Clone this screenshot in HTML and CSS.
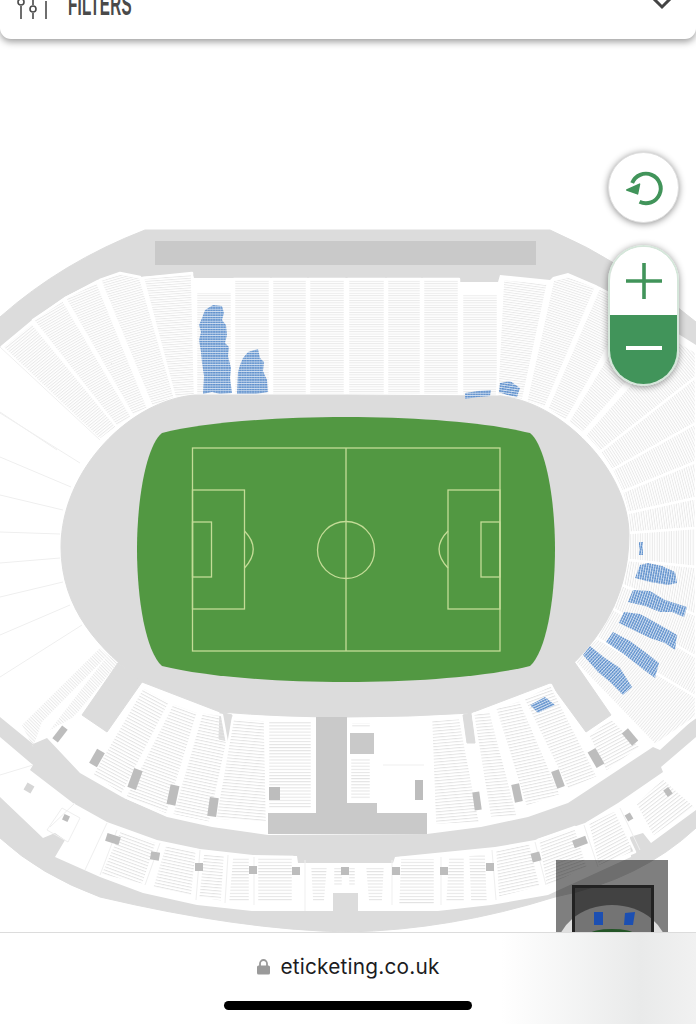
FILE: index.html
```html
<!DOCTYPE html>
<html lang="en">
<head>
<meta charset="utf-8">
<title>Seat map</title>
<link rel="stylesheet" href="styles.css">
</head>
<body>
<header class="filters">
  <svg class="filters-icon" viewBox="0 0 34 20" width="34" height="20" aria-hidden="true">
    <g class="icon-line">
      <circle cx="4" cy="2" r="3"/><path d="M4 6V19"/>
      <circle cx="16" cy="9" r="3"/><path d="M16 0V5M16 13V19"/>
      <circle cx="29" cy="-4" r="3"/><path d="M29 1V19"/>
    </g>
  </svg>
  <span class="filters-label">FILTERS</span>
  <svg class="filters-chevron" viewBox="0 0 22 10" width="22" height="10" aria-hidden="true">
    <path d="M1 -3L11 7L21 -3"/>
  </svg>
</header>

<main class="map">
  <svg class="stadium" viewBox="0 39 696 893" width="696" height="893" role="img" aria-label="Stadium seat map">
    <defs>
      <pattern id="r" width="4" height="2.4" patternUnits="userSpaceOnUse"><rect width="4" height="1" fill="#e9e9e9"/></pattern>
      <pattern id="r-39" href="#r" patternTransform="rotate(-39)"/>
      <pattern id="r-30" href="#r" patternTransform="rotate(-30)"/>
      <pattern id="r-22" href="#r" patternTransform="rotate(-22)"/>
      <pattern id="r-16" href="#r" patternTransform="rotate(-16)"/>
      <pattern id="r-4" href="#r" patternTransform="rotate(-4)"/>
      <pattern id="r8" href="#r" patternTransform="rotate(8)"/>
      <pattern id="r18" href="#r" patternTransform="rotate(18)"/>
      <pattern id="r26" href="#r" patternTransform="rotate(26)"/>
      <pattern id="r42" href="#r" patternTransform="rotate(42)"/>
      <pattern id="r50" href="#r" patternTransform="rotate(50)"/>
      <pattern id="r57" href="#r" patternTransform="rotate(57)"/>
      <pattern id="r65" href="#r" patternTransform="rotate(65)"/>
      <pattern id="r75" href="#r" patternTransform="rotate(75)"/>
      <pattern id="r82" href="#r" patternTransform="rotate(82)"/>
      <pattern id="r90" href="#r" patternTransform="rotate(90)"/>
      <pattern id="r100" href="#r" patternTransform="rotate(100)"/>
      <pattern id="r110" href="#r" patternTransform="rotate(110)"/>
      <pattern id="r120" href="#r" patternTransform="rotate(120)"/>
      <pattern id="r130" href="#r" patternTransform="rotate(130)"/>
      <pattern id="r45" href="#r" patternTransform="rotate(45)"/>

      <pattern id="l" width="4" height="3.1" patternUnits="userSpaceOnUse"><rect width="4" height="1" fill="#e3e3e3"/></pattern>
      <pattern id="l0" href="#l"/>
      <pattern id="l28" href="#l" patternTransform="rotate(28)"/>
      <pattern id="l20" href="#l" patternTransform="rotate(20)"/>
      <pattern id="l12" href="#l" patternTransform="rotate(12)"/>
      <pattern id="l5" href="#l" patternTransform="rotate(5)"/>
      <pattern id="l-5" href="#l" patternTransform="rotate(-5)"/>
      <pattern id="l-12" href="#l" patternTransform="rotate(-12)"/>
      <pattern id="l-20" href="#l" patternTransform="rotate(-20)"/>
      <pattern id="l-28" href="#l" patternTransform="rotate(-28)"/>
      <pattern id="l-38" href="#l" patternTransform="rotate(-38)"/>

      <pattern id="b" width="2.6" height="2.4" patternUnits="userSpaceOnUse">
        <rect width="2.6" height="2.4" fill="#d5e2f2"/><rect width="2.3" height="1.5" fill="#5f90cc"/>
      </pattern>
      <pattern id="b0" href="#b"/>
      <pattern id="b8" href="#b" patternTransform="rotate(8)"/>
      <pattern id="b-25" href="#b" patternTransform="rotate(-25)"/>
      <pattern id="b100" href="#b" patternTransform="rotate(100)"/>
      <pattern id="b108" href="#b" patternTransform="rotate(108)"/>
      <pattern id="b115" href="#b" patternTransform="rotate(115)"/>
      <pattern id="b123" href="#b" patternTransform="rotate(123)"/>
      <pattern id="b133" href="#b" patternTransform="rotate(133)"/>
    </defs>

    <!-- outer concourse -->
    <path class="concourse" d="M0 317Q62 262 145 230L550 230Q625 262 696 322L696 828Q640 880 555 897Q450 930 348 932Q240 930 100 897Q40 875 0 838Z"/>
    <rect class="block-dark" x="155" y="241" width="381" height="24"/>

    <!-- upper stand white area -->
    <polygon class="white" points="0,347 2,345 32,320 63,298 97,280 120,273 140,277 192,273 194,278 460,278 460,282 498,282 500,275 550,280 553,277 568,273 596,285 640,310 696,345 696,717 660,750 653,747 600,782 568,803 528,817 481,827 427,834 268,835 212,827 167,817 122,797 80,773 47,738 33,744 0,717"/>

    <!-- upper stand, top and fans -->
    <g class="sec">
      <polygon fill="url(#r-39)" points="2,347 32,323 117,427 100,440"/>
      <polygon fill="url(#r-30)" points="33,320 63,300 132,417 117,427"/>
      <polygon fill="url(#r-22)" points="65,298 97,282 148,408 133,416"/>
      <polygon fill="url(#r-16)" points="100,280 120,273 140,277 175,398 152,407"/>
      <polygon fill="url(#r-4)" points="143,278 192,273 195,395 175,398"/>
      <rect fill="url(#r)" x="196" y="292" width="36" height="103"/>
      <rect fill="url(#r)" x="234" y="279" width="36" height="116"/>
      <rect fill="url(#r)" x="272" y="279" width="35" height="116"/>
      <rect fill="url(#r)" x="309" y="279" width="36" height="116"/>
      <rect fill="url(#r)" x="348" y="279" width="37" height="116"/>
      <rect fill="url(#r)" x="387" y="279" width="34" height="116"/>
      <rect fill="url(#r)" x="423" y="279" width="36" height="116"/>
      <rect fill="url(#r)" x="462" y="294" width="36" height="102"/>
      <polygon fill="url(#r8)" points="503,279 548,283 523,400 497,397"/>
      <polygon fill="url(#r18)" points="553,280 568,276 596,287 545,408 526,402"/>
      <polygon fill="url(#r26)" points="599,288 632,305 566,421 547,409"/>
      <polygon fill="url(#r42)" points="636,308 668,335 583,433 568,422"/>
      <polygon fill="url(#r50)" points="672,338 696,352 696,377 600,452 585,435"/>
      <polygon fill="url(#r57)" points="600,452 696,377 696,423 612,470"/>
      <polygon fill="url(#r65)" points="612,470 696,423 696,462 622,492"/>
      <polygon fill="url(#r75)" points="622,492 696,462 696,498 628,513"/>
      <polygon fill="url(#r82)" points="628,513 696,498 696,528 629,533"/>
      <polygon fill="url(#r90)" points="629,533 696,528 696,567 628,560"/>
      <polygon fill="url(#r100)" points="628,560 696,567 696,615 622,585"/>
      <polygon fill="url(#r110)" points="622,585 696,615 696,657 610,607"/>
      <polygon fill="url(#r120)" points="610,607 696,657 696,697 597,638"/>
      <polygon fill="url(#r130)" points="597,638 696,697 696,717 655,745 573,660"/>
    </g>

    <!-- left side empty sector lines -->
    <g class="thin">
      <path d="M0 347L100 440M0 412L57 450M0 413L80 463M0 457L71 487M0 495L63 510M0 532L60 534M0 563L60 558M0 597L63 582M0 635L70 605M0 677L82 625"/>
    </g>
    <polygon fill="url(#r45)" points="100,648 108,655 42,722 33,747 22,725"/>
    <polygon fill="url(#r45)" points="108,655 118,663 78,712 72,718 50,730"/>

    <!-- inner bowl -->
    <path class="concourse" d="M346 395L195 395C130 400 61 470 61 547C61 610 100 650 142 682L220 712Q280 717 346 717Q410 717 471 713L550 683C595 650 629 600 629 535C629 470 560 400 498 396Z"/>
    <polygon class="concourse" points="142,682 107,732 82,715 118,663"/>
    <polygon class="concourse" points="550,683 586,732 611,715 573,660"/>
    <polygon class="concourse" points="220,712 219,739 228,741 232,715"/>
    <polygon class="concourse" points="463,715 467,743 475,743 471,713"/>

    <!-- pitch -->
    <path class="pitch" d="M346 417C420 417 490 423 530 433C546 446 555 500 555 549C555 600 546 652 530 666C490 676 420 682 346 682C272 682 202 676 162 666C146 652 137 600 137 549C137 500 146 446 162 433C202 423 272 417 346 417Z"/>
    <g class="pitch-lines">
      <rect x="192.500" y="448" width="307.500" height="203"/>
      <path d="M346 448V651"/>
      <circle cx="346" cy="550" r="28.500"/>
      <rect x="192.500" y="490" width="52" height="119"/>
      <rect x="192.500" y="522" width="19" height="55"/>
      <path d="M244.500 531Q262 549 244.500 568"/>
      <rect x="448" y="490" width="52" height="119"/>
      <rect x="481" y="522" width="19" height="55"/>
      <path d="M448 531Q430 549 448 568"/>
    </g>

    <!-- lower stand -->
    <g class="sec">
      <polygon fill="url(#l28)" points="143,687 170,702 122,795 92,775"/>
      <polygon fill="url(#l20)" points="173,703 198,712 167,815 125,797"/>
      <polygon fill="url(#l12)" points="202,712 222,715 227,743 210,823 172,815"/>
      <polygon fill="url(#l5)" points="233,718 265,720 267,823 215,820"/>
      <rect fill="url(#l0)" x="268" y="720" width="44" height="90"/>
      <rect fill="url(#l0)" x="351" y="722" width="20" height="6"/>
      <rect fill="url(#l0)" x="350" y="757" width="21" height="43"/>
      <polygon fill="url(#l-5)" points="431,720 460,718 480,823 435,825"/>
      <polygon fill="url(#l-5)" points="473,714 490,710 518,817 490,818 478,745"/>
      <polygon fill="url(#l-12)" points="495,708 520,700 561,795 526,807"/>
      <polygon fill="url(#l-20)" points="523,698 551,685 598,777 568,790"/>
      <polygon fill="url(#l-28)" points="588,735 611,718 641,747 606,772"/>
    </g>
    <polygon class="block-dark" points="316,717 347,717 347,803 377,803 377,813 427,813 427,834 268,834 268,813 316,813"/>
    <rect class="white" x="377" y="718" width="50" height="95"/>
    <rect class="block-dark" x="350" y="733" width="24" height="21"/>
    <path class="thin" d="M383 765H424"/>

    <g class="gangway">
      <rect x="415" y="780" width="8" height="20"/>
      <rect x="269" y="787" width="11" height="13"/>
      <rect x="-3.500" y="-8" width="7" height="16" transform="translate(60 734) rotate(38)"/>
      <rect x="-4.500" y="-8" width="9" height="16" transform="translate(97 758) rotate(30)"/>
      <rect x="-4.500" y="-10" width="9" height="20" transform="translate(135 779) rotate(20)"/>
      <rect x="-4.500" y="-10" width="9" height="20" transform="translate(173 795) rotate(12)"/>
      <rect x="-4.500" y="-9.500" width="9" height="19" transform="translate(213 807) rotate(8)"/>
      <rect x="-3.500" y="-9" width="7" height="18" transform="translate(477 801) rotate(-8)"/>
      <rect x="-4" y="-9" width="8" height="18" transform="translate(517 793) rotate(-12)"/>
      <rect x="-4" y="-9" width="8" height="18" transform="translate(558 779) rotate(-20)"/>
      <rect x="-4.500" y="-9" width="9" height="18" transform="translate(596 758) rotate(-30)"/>
      <rect x="-4" y="-8" width="8" height="16" transform="translate(630 737) rotate(-40)"/>
    </g>

    <!-- outer tier -->
    <polygon class="white" points="0,737 33,765 30,770 73,803 107,822 157,840 200,849 253,855 297,856 298,863 393,863 395,857 495,847 535,840 585,823 618,803 663,772 661,767 696,737 696,810 651,843 643,833 630,837 631,857 548,895 491,905 438,911 358,911 358,893 333,893 333,911 252,911 197,905 143,893 100,877 55,857 65,840 55,833 43,838 0,797"/>
    <g class="sec">
      <polygon fill="url(#l20)" points="120,830 157,842 143,885 100,875"/>
      <polygon fill="url(#l12)" points="165,845 197,850 192,897 152,888"/>
      <polygon fill="url(#l5)" points="203,853 225,855 222,902 198,898"/>
      <polygon fill="url(#l0)" points="232,857 250,857 250,903 228,902"/>
      <rect fill="url(#l0)" x="257" y="857" width="36" height="46"/>
      <polygon fill="url(#l0)" points="310,867 328,867 325,903 312,903"/>
      <rect fill="url(#l0)" x="333" y="867" width="10" height="20"/>
      <rect fill="url(#l0)" x="348" y="867" width="8" height="20"/>
      <polygon fill="url(#l0)" points="365,867 385,867 383,903 368,903"/>
      <polygon fill="url(#l0)" points="400,858 435,858 435,905 398,905"/>
      <polygon fill="url(#l0)" points="448,857 465,856 465,903 445,903"/>
      <polygon fill="url(#l0)" points="468,855 486,853 488,902 470,902"/>
      <polygon fill="url(#l-12)" points="495,850 530,843 541,887 498,898"/>
      <polygon fill="url(#l-20)" points="538,840 575,827 588,867 546,888"/>
      <polygon fill="url(#l-28)" points="588,823 615,810 635,852 598,867"/>
      <polygon fill="url(#l-38)" points="635,803 663,778 696,807 653,837"/>
    </g>
    <g class="thin">
      <path d="M0 775L33 765M75 803L50 827M107 823L85 870M47 830L62 808L80 818L68 842L47 830M117 830L100 875M160 843L145 885M200 850L196 900M228 855L225 903M254 857V905M305 860V911M392 860V905M441 857V905M492 850L496 900M535 842L546 885M584 825L598 867M620 808L640 850"/>
    </g>
    <g class="gangway">
      <rect x="-7" y="-4" width="14" height="8" transform="translate(113 839) rotate(18)"/>
      <rect x="-4.500" y="-4" width="9" height="8" transform="translate(155 856) rotate(10)"/>
      <rect x="195" y="863" width="8" height="8"/>
      <rect x="249" y="866" width="8" height="8"/>
      <rect x="292" y="867" width="8" height="8"/>
      <rect x="341" y="867" width="8" height="8"/>
      <rect x="392" y="867" width="8" height="8"/>
      <rect x="440" y="867" width="8" height="8"/>
      <rect x="486" y="863" width="8" height="8"/>
      <rect x="-4.500" y="-4.500" width="9" height="9" transform="translate(536 857) rotate(-15)"/>
      <rect x="-7" y="-4" width="14" height="8" transform="translate(580 842) rotate(-20)"/>
      <rect x="-3" y="-3.500" width="6" height="7" transform="translate(629 817) rotate(-30)"/>
      <rect x="-3" y="-4" width="6" height="8" transform="translate(668 792) rotate(-35)"/>
      <rect x="-3" y="-3" width="6" height="6" transform="translate(66 818) rotate(25)"/>
      <rect class="faint" x="-4" y="-4" width="8" height="8" transform="translate(29 788) rotate(30)"/>
    </g>

    <!-- available seats -->
    <polygon fill="url(#b0)" points="205,310 213,305 222,306 224,313 222,320 226,325 227,335 225,343 229,347 228,356 231,368 230,378 232,393 220,394 212,392 203,394 204,376 202,363 201,352 199,340 201,332 199,325 202,318"/>
    <polygon fill="url(#b0)" points="243,358 248,352 258,349 260,358 264,362 263,371 267,380 268,392 256,394 237,394 238,372 240,365"/>
    <polygon fill="url(#b0)" points="465,393 478,391 491,390 490,396 478,397 465,399"/>
    <polygon fill="url(#b8)" points="500,383 510,381 520,388 517,397 507,395 499,392"/>
    <polygon fill="url(#b100)" points="639,542 643,542 643,555 639,555"/>
    <polygon fill="url(#b100)" points="640,565 648,563 662,566 675,572 677,583 668,585 650,582 635,578"/>
    <polygon fill="url(#b108)" points="633,590 650,591 665,600 687,607 684,617 672,612 660,612 645,606 628,602"/>
    <polygon fill="url(#b115)" points="624,612 640,614 660,625 677,635 675,650 665,643 650,638 619,623"/>
    <polygon fill="url(#b123)" points="613,632 630,641 645,652 659,663 655,678 644,670 625,655 606,642"/>
    <polygon fill="url(#b133)" points="590,646 605,658 620,668 632,687 623,695 610,682 598,672 583,655"/>
    <polygon fill="url(#b-25)" points="545,697 555,705 538,713 530,705"/>
  </svg>

  <div class="controls">
    <button class="reset" type="button" aria-label="Reset view">
      <svg viewBox="0 0 70 70" width="70" height="70" aria-hidden="true">
        <path class="reset-arc" d="M23.500 30A15 15 0 1 1 31 49"/>
        <path class="reset-head" d="M18 37L31 31L29 41Z"/>
      </svg>
    </button>
    <div class="zoom">
      <button class="zoom-in" type="button" aria-label="Zoom in">
        <svg viewBox="0 0 36 36" width="36" height="36" aria-hidden="true"><path d="M0 18H36M18 0V36"/></svg>
      </button>
      <button class="zoom-out" type="button" aria-label="Zoom out">
        <svg viewBox="0 0 36 4" width="36" height="4" aria-hidden="true"><rect width="36" height="4"/></svg>
      </button>
    </div>
  </div>

  <div class="minimap">
    <svg viewBox="0 0 112 72" width="112" height="72" aria-hidden="true">
      <ellipse class="mini-bowl" cx="56" cy="92" rx="56" ry="47"/>
      <rect class="mini-view" x="17.500" y="26.500" width="79" height="60"/>
      <rect class="mini-seat" x="38" y="52" width="9" height="13"/>
      <polygon class="mini-seat" points="69,53 79,52 77,65 68,65"/>
      <ellipse class="mini-pitch" cx="56" cy="74" rx="22" ry="5"/>
    </svg>
  </div>
</main>

<footer class="browser-bar">
  <div class="address">
    <svg class="lock" viewBox="0 0 13 16" width="13" height="16" aria-hidden="true">
      <path class="lock-shackle" d="M3 7V4.500A3.500 3.500 0 0 1 10 4.500V7"/>
      <rect class="lock-body" y="6.500" width="13" height="9" rx="1.500"/>
    </svg>
    <span class="domain">eticketing.co.uk</span>
  </div>
  <div class="home-indicator"></div>
</footer>
</body>
</html>
```

FILE: styles.css
```css
* { box-sizing: border-box; }

html, body {
  margin: 0;
  padding: 0;
  height: 1024px;
  overflow: hidden;
  background: #fff;
}

body {
  display: flex;
  flex-direction: column;
  font-family: "Inter", "Liberation Sans", sans-serif;
}

/* Filters bar */
.filters {
  position: relative;
  z-index: 2;
  flex: 0 0 39px;
  display: flex;
  align-items: flex-start;
  padding: 0 23px 0 17px;
  background: #fff;
  border-radius: 0 0 11px 11px;
  box-shadow: 0 3px 7px rgba(0, 0, 0, .38);
}

.filters-icon { overflow: hidden; }
.icon-line { fill: none; stroke: #4a4a4a; stroke-width: 1.6; }

.filters-label {
  display: block;
  margin-left: 17px;
  margin-top: 0;
  font-family: "Liberation Sans Narrow", "Liberation Sans", sans-serif;
  font-size: 20px;
  font-weight: 700;
  line-height: 23px;
  color: #4a4a4a;
  transform: scale(.76, 1.6);
  transform-origin: left bottom;
  letter-spacing: .3px;
  white-space: nowrap;
}

.filters-chevron { margin-left: auto; }
.filters-chevron path { fill: none; stroke: #444; stroke-width: 3; }

/* Map */
.map {
  position: relative;
  flex: 0 0 893px;
  overflow: hidden;
}

.stadium { display: block; }

.concourse { fill: #dcdcdc; stroke: #dcdcdc; stroke-width: 1; stroke-linejoin: round; }
.block-dark { fill: #c9c9c9; }
.white { fill: #fff; }
.sec polygon, .sec rect { stroke: #fff; stroke-width: 2.500; stroke-linejoin: round; }
.thin, .thin path { fill: none; stroke: #efefef; stroke-width: 1; }
.gangway rect { fill: #bdbdbd; }
.gangway .faint { fill: #d6d6d6; }

.pitch { fill: #529842; }
.pitch-lines { fill: none; stroke: #c4dc97; stroke-width: 1.300; }

/* Controls over the map */
.controls {
  position: absolute;
  top: 113px;
  right: 17px;
  display: flex;
  flex-direction: column;
  gap: 22px;
  width: 71px;
}

.reset, .zoom-in, .zoom-out {
  display: flex;
  align-items: center;
  justify-content: center;
  padding: 0;
  border: 0;
  background: none;
}

.reset {
  width: 71px;
  height: 71px;
  border-radius: 50%;
  background: #fff;
  border: 1px solid #dfdfdf;
  box-shadow: 0 1px 7px rgba(0, 0, 0, .45);
}

.reset-arc { fill: none; stroke: #41945a; stroke-width: 4; }
.reset-head { fill: #41945a; stroke: #41945a; stroke-width: 1.500; stroke-linejoin: round; }

.zoom {
  display: flex;
  flex-direction: column;
  height: 141px;
  border-radius: 36px;
  overflow: hidden;
  border: 2px solid #d5e6da;
  box-shadow: 0 1px 7px rgba(0, 0, 0, .45);
}

.zoom-in { flex: 0 0 68px; background: #fff; }
.zoom-in path { fill: none; stroke: #41945a; stroke-width: 3.600; }

.zoom-out { flex: 1; background: #41945a; padding-bottom: 4px; }
.zoom-out rect { fill: #fff; }

/* Overview */
.minimap {
  position: absolute;
  left: 556px;
  bottom: 0;
  width: 112px;
  height: 72px;
  background: rgba(0, 0, 0, .5);
}

.minimap svg { display: block; }
.mini-bowl { fill: rgba(255, 255, 255, .75); }
.mini-view { fill: rgba(0, 0, 0, .48); stroke: #222; stroke-width: 3; }
.mini-seat { fill: #1c4fb2; }
.mini-pitch { fill: #245527; }

/* Browser bar */
.browser-bar {
  position: relative;
  flex: 1;
  display: flex;
  flex-direction: column;
  align-items: center;
  border-top: 1px solid #dcdcdc;
  background: linear-gradient(90deg, #fff 72%, #e9eaea 92%, #f1f1f1 100%);
}

.address {
  display: flex;
  align-items: center;
  gap: 10px;
  margin-top: 21px;
  margin-left: 1px;
  height: 26px;
}

.lock-body { fill: #9a9a9a; }
.lock-shackle { fill: none; stroke: #9a9a9a; stroke-width: 1.800; }

.domain {
  font-size: 20.800px;
  line-height: 26px;
  color: #1c1c1e;
  letter-spacing: .2px;
}

.home-indicator {
  width: 248px;
  height: 9px;
  margin-top: 21px;
  border-radius: 5px;
  background: #000;
}
```
